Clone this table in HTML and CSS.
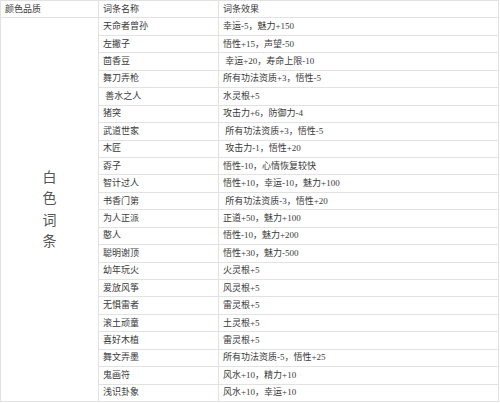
FILE: index.html
```html
<!DOCTYPE html>
<html lang="zh-CN">
<head>
<meta charset="utf-8">
<title>词条</title>
<link rel="stylesheet" href="styles.css">
</head>
<body>
<div class="sheet">
  <div class="cell head">颜色品质</div>
  <div class="cell head">词条名称</div>
  <div class="cell head">词条效果</div>
  <div class="cell quality"><span>白</span><span>色</span><span>词</span><span>条</span></div>

  <div class="cell">天命者曾孙</div><div class="cell">幸运-5，魅力+150</div>
  <div class="cell">左撇子</div><div class="cell">悟性+15，声望-50</div>
  <div class="cell">茴香豆</div><div class="cell"> 幸运+20，寿命上限-10</div>
  <div class="cell">舞刀弄枪</div><div class="cell">所有功法资质+3，悟性-5</div>
  <div class="cell"> 善水之人</div><div class="cell">水灵根+5</div>
  <div class="cell">猪突</div><div class="cell">攻击力+6，防御力-4</div>
  <div class="cell">武道世家</div><div class="cell"> 所有功法资质+3，悟性-5</div>
  <div class="cell">木匠</div><div class="cell"> 攻击力-1，悟性+20</div>
  <div class="cell">孬子</div><div class="cell">悟性-10，心情恢复较快</div>
  <div class="cell">智计过人</div><div class="cell">悟性+10，幸运-10，魅力+100</div>
  <div class="cell">书香门第</div><div class="cell"> 所有功法资质-3，悟性+20</div>
  <div class="cell">为人正派</div><div class="cell">正道+50，魅力+100</div>
  <div class="cell">憨人</div><div class="cell">悟性-10，魅力+200</div>
  <div class="cell">聪明谢顶</div><div class="cell">悟性+30，魅力-500</div>
  <div class="cell">幼年玩火</div><div class="cell">火灵根+5</div>
  <div class="cell">爱放风筝</div><div class="cell">风灵根+5</div>
  <div class="cell">无惧雷者</div><div class="cell">雷灵根+5</div>
  <div class="cell">滚土顽童</div><div class="cell">土灵根+5</div>
  <div class="cell">喜好木植</div><div class="cell">雷灵根+5</div>
  <div class="cell">舞文弄墨</div><div class="cell">所有功法资质-5，悟性+25</div>
  <div class="cell">鬼画符</div><div class="cell">风水+10，精力+10</div>
  <div class="cell">浅识卦象</div><div class="cell">风水+10，幸运+10</div>
</div>
</body>
</html>
```

FILE: styles.css
```css
html, body {
  margin: 0;
  padding: 0;
  background: #ffffff;
}

.sheet {
  display: grid;
  grid-template-columns: 97px 119px 279px;
  grid-template-rows: repeat(23, 16.45px);
  gap: 1px;
  padding: 1px;
  width: max-content;
  background: #e2e2e2;
  font-family: "Liberation Serif", "Noto Sans CJK SC", serif;
  font-size: 9px;
  color: #3a3a3a;
}

.cell {
  background: #ffffff;
  display: flex;
  align-items: center;
  padding-left: 4px;
  white-space: pre;
  line-height: 1;
}

.quality {
  grid-column: 1;
  grid-row: 2 / span 22;
  flex-direction: column;
  justify-content: center;
  padding-left: 0;
  font-size: 14px;
  color: #555555;
}

.quality span {
  display: block;
  line-height: 21.5px;
}
```
